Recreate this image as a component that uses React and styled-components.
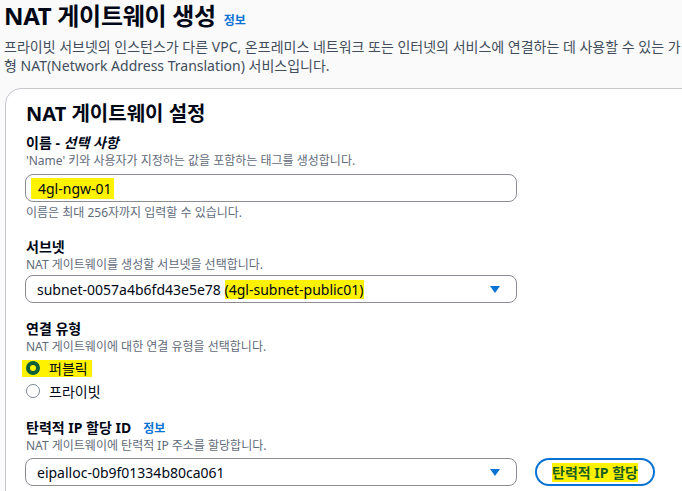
import React from 'react';
import styled, { createGlobalStyle } from 'styled-components';

const GlobalStyle = createGlobalStyle`
  html, body {
    margin: 0;
    padding: 0;
    background: #fafafa;
    overflow: hidden;
  }
  body {
    font-family: "Noto Sans", "Noto Sans CJK KR", sans-serif;
    color: #000716;
  }
`

const Page = styled.div`
  padding: 1px 0 0 4px;
  width: 678px;
  height: 490px;
  overflow: hidden;
`
const Header = styled.div`
  display: flex;
  align-items: baseline;
  gap: 8px;
`
const Title = styled.h1`
  margin: 0;
  font-size: 24px;
  line-height: 30px;
  font-weight: 700;
  letter-spacing: -0.3px;
`
const InfoLink = styled.a`
  font-size: 12px;
  font-weight: 700;
  color: #0972d3;
  text-decoration: none;
`
const Description = styled.p`
  margin: 6px 0 0;
  font-size: 14px;
  line-height: 19px;
  color: #414d5c;
  white-space: nowrap;
`
const Card = styled.section`
  margin: 13px 0 0 1px;
  width: 900px;
  background: #fff;
  border: 1px solid #c6c6cd;
  border-radius: 16px;
  padding: 13px 20px 20px 19px;
`
const CardTitle = styled.h2`
  margin: 0 0 7px 1px;
  font-size: 20px;
  line-height: 24px;
  font-weight: 700;
`
const Field = styled.div`
  display: flex;
  flex-direction: column;
  margin-bottom: ${p => p.$gap || 14}px;
`
const Label = styled.div`
  display: flex;
  align-items: baseline;
  gap: 12px;
  margin-left: 1px;
  height: 20px;
  font-size: 14px;
  line-height: 20px;
  font-weight: 700;
  em {
    font-weight: 700;
  }
`
const Hint = styled.div`
  margin: ${p => p.$top || 0}px 0 0 1px;
  height: 16px;
  font-size: 12px;
  line-height: 16px;
  color: #5f6b7a;
`
const Control = styled.div`
  display: flex;
  align-items: center;
  box-sizing: border-box;
  width: 492px;
  height: 28px;
  margin: ${p => p.$top ?? 6}px 0 0;
  padding: 0 10px 0 ${p => p.$pl || 11}px;
  border: 1px solid #8c8c94;
  border-radius: 8px;
  background: #fff;
  font-size: 14px;
  color: #000716;
`
const Value = styled.span`
  flex: 1;
  white-space: nowrap;
`
const Mark = styled.span`
  background: #fff200;
  padding: ${p => p.$pad || '0'};
`
const Arrow = styled.svg`
  width: 10px;
  height: 7px;
  margin-right: 6px;
  fill: #0972d3;
`
const ControlRow = styled.div`
  display: flex;
  align-items: center;
  gap: 18px;
  margin-top: 4px;
`
const PillButton = styled.button`
  box-sizing: border-box;
  height: 28px;
  width: 120px;
  padding: 0;
  border: 2px solid #0972d3;
  border-radius: 20px;
  background: #fff;
  font-family: inherit;
  font-size: 14px;
  font-weight: 700;
  color: #1b5e20;
  cursor: pointer;
`
const RadioList = styled.div`
  display: flex;
  flex-direction: column;
  gap: 1px;
  margin-top: 2px;
`
const RadioRow = styled.label`
  display: flex;
  align-items: center;
  height: 22px;
  font-size: 14px;
`
const RadioWrap = styled.span`
  display: inline-flex;
  align-items: center;
  gap: 9px;
  height: 17px;
  padding: 0 4px 0 ${p => (p.$marked ? 0 : 4)}px;
  margin-left: -3px;
  background: ${p => (p.$marked ? '#fff200' : 'transparent')};
`
const Dot = styled.span`
  display: inline-block;
  box-sizing: border-box;
  width: 14px;
  height: 14px;
  border-radius: 50%;
  margin-left: ${p => (p.$checked ? 4 : 0)}px;
  border: ${p => (p.$checked ? '4px solid #0b5e3c' : '1.5px solid #7d8998')};
  background: ${p => (p.$checked ? '#fff200' : '#fff')};
`

const App = () => {
    return (
        <>
            <GlobalStyle />
            <Page>
                <Header>
                    <Title>NAT 게이트웨이 생성</Title>
                    <InfoLink href="#">정보</InfoLink>
                </Header>
                <Description>
                    프라이빗 서브넷의 인스턴스가 다른 VPC, 온프레미스 네트워크 또는 인터넷의 서비스에 연결하는 데 사용할 수 있는 가
                    <br />
                    형 NAT(Network Address Translation) 서비스입니다.
                </Description>
                <Card>
                    <CardTitle>NAT 게이트웨이 설정</CardTitle>

                    <Field $gap={16}>
                        <Label><span>이름 - <em>선택 사항</em></span></Label>
                        <Hint>'Name' 키와 사용자가 지정하는 값을 포함하는 태그를 생성합니다.</Hint>
                        <Control $pl={5} $top={5}>
                            <Value><Mark $pad="1px 2px 1px 7px">4gl-ngw-01</Mark></Value>
                        </Control>
                        <Hint $top={3}>이름은 최대 256자까지 입력할 수 있습니다.</Hint>
                    </Field>

                    <Field $gap={16}>
                        <Label>서브넷</Label>
                        <Hint>NAT 게이트웨이를 생성할 서브넷을 선택합니다.</Hint>
                        <Control $top={2}>
                            <Value>subnet-0057a4b6fd43e5e78 <Mark>(4gl-subnet-public01)</Mark></Value>
                            <Arrow viewBox="0 0 10 7"><path d="M0 0h10L5 7z" /></Arrow>
                        </Control>
                    </Field>

                    <Field $gap={16}>
                        <Label>연결 유형</Label>
                        <Hint>NAT 게이트웨이에 대한 연결 유형을 선택합니다.</Hint>
                        <RadioList>
                            <RadioRow>
                                <RadioWrap $marked>
                                    <Dot $checked />
                                    퍼블릭
                                </RadioWrap>
                            </RadioRow>
                            <RadioRow>
                                <RadioWrap>
                                    <Dot />
                                    프라이빗
                                </RadioWrap>
                            </RadioRow>
                        </RadioList>
                    </Field>

                    <Field>
                        <Label>탄력적 IP 할당 ID <InfoLink href="#">정보</InfoLink></Label>
                        <Hint>NAT 게이트웨이에 탄력적 IP 주소를 할당합니다.</Hint>
                        <ControlRow>
                            <Control $top={0}>
                                <Value>eipalloc-0b9f01334b80ca061</Value>
                                <Arrow viewBox="0 0 10 7"><path d="M0 0h10L5 7z" /></Arrow>
                            </Control>
                            <PillButton><Mark>탄력적 IP 할당</Mark></PillButton>
                        </ControlRow>
                    </Field>
                </Card>
            </Page>
        </>
    );
};

export default App;
